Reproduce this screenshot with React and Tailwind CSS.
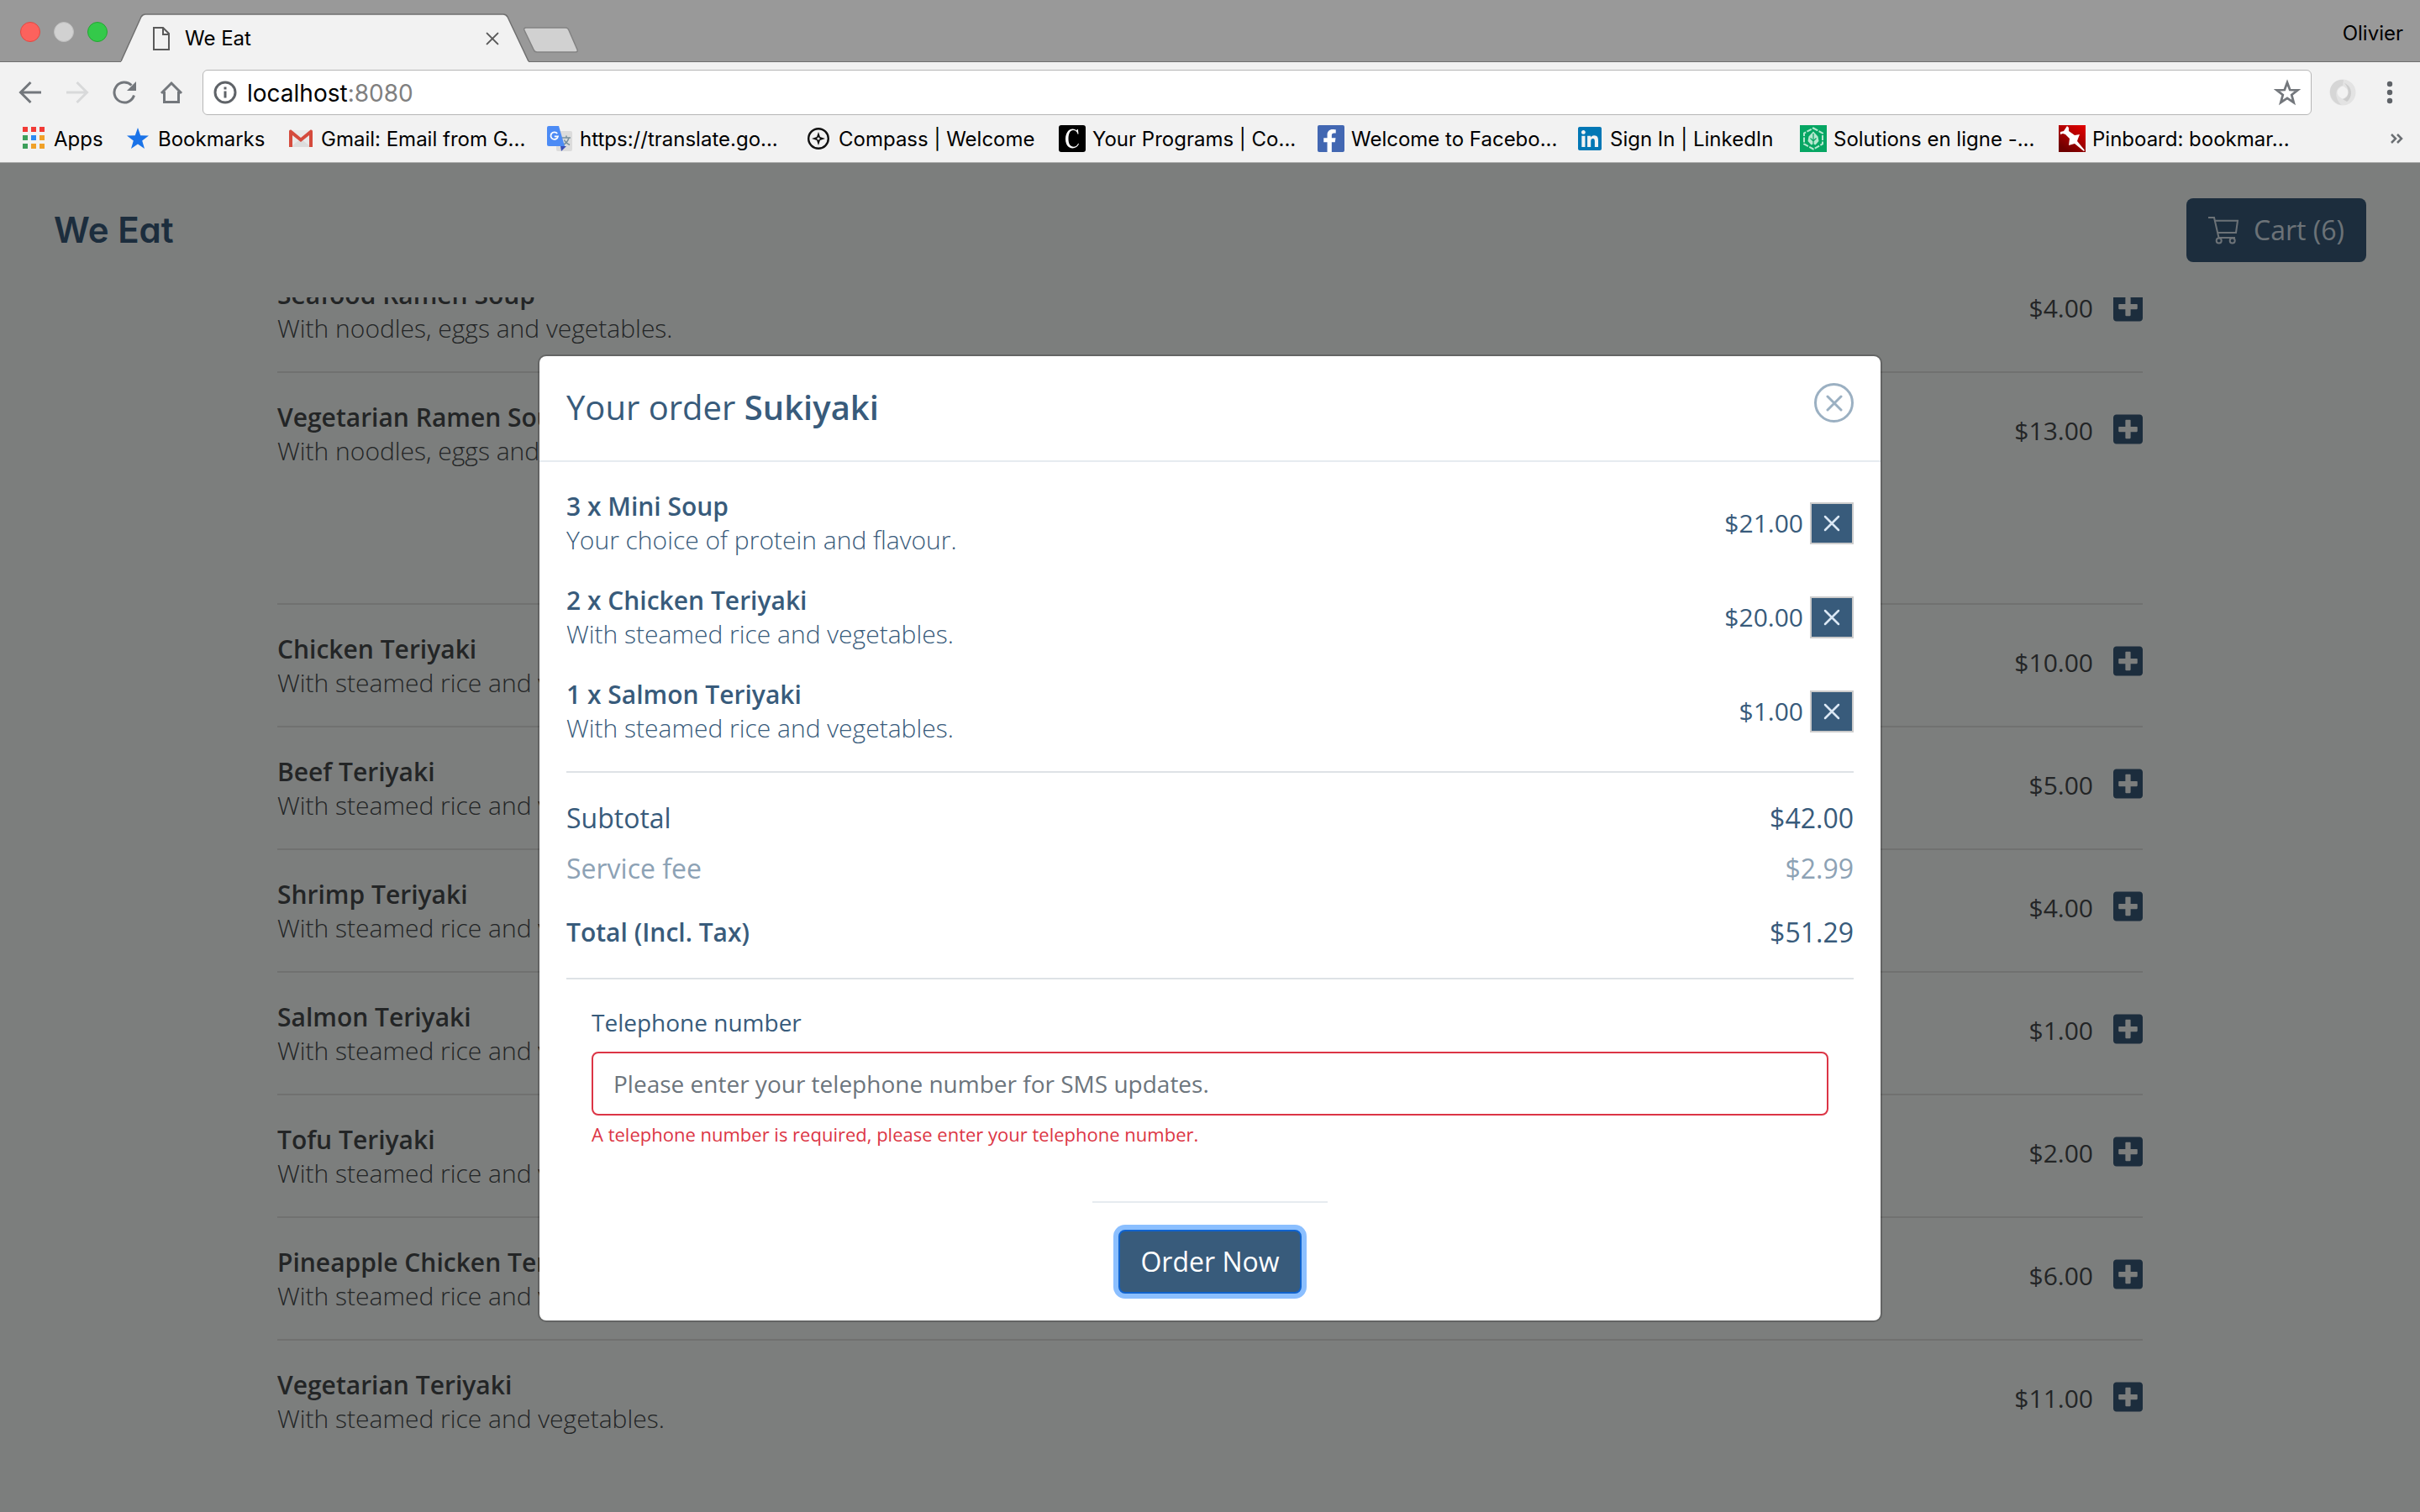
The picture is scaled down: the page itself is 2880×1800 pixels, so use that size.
import React from "react";
import { FaFacebookF, FaLinkedin, FaPlusSquare } from "react-icons/fa";

const bookmarks = [
  { label: "Apps", icon: AppsIcon, width: "w-[124px]" },
  { label: "Bookmarks", icon: BookmarkStar, width: "w-[194px]" },
  { label: "Gmail: Email from G...", icon: GmailIcon, width: "w-[308px]" },
  { label: "https://translate.go...", icon: TranslateIcon, width: "w-[308px]" },
  { label: "Compass | Welcome", icon: CompassIcon, width: "w-[302px]" },
  { label: "Your Programs | Co...", icon: ProgramsIcon, width: "w-[308px]" },
  { label: "Welcome to Facebo...", icon: FacebookIcon, width: "w-[308px]" },
  { label: "Sign In | LinkedIn", icon: LinkedInIcon, width: "w-[266px]" },
  { label: "Solutions en ligne -...", icon: SolutionsIcon, width: "w-[308px]" },
  { label: "Pinboard: bookmar...", icon: PinboardIcon, width: "w-[308px]" },
];

const soups = [
  { name: "Seafood Ramen Soup", desc: "With noodles, eggs and vegetables.", price: "$4.00" },
  { name: "Vegetarian Ramen Soup", desc: "With noodles, eggs and vegetables.", price: "$13.00" },
];

const teriyaki = [
  { name: "Chicken Teriyaki", price: "$10.00" },
  { name: "Beef Teriyaki", price: "$5.00" },
  { name: "Shrimp Teriyaki", price: "$4.00" },
  { name: "Salmon Teriyaki", price: "$1.00" },
  { name: "Tofu Teriyaki", price: "$2.00" },
  { name: "Pineapple Chicken Teriyaki", price: "$6.00" },
  { name: "Vegetarian Teriyaki", price: "$11.00" },
].map((dish) => ({ ...dish, desc: "With steamed rice and vegetables." }));

const order = [
  { name: "3 x Mini Soup", desc: "Your choice of protein and flavour.", price: "$21.00" },
  { name: "2 x Chicken Teriyaki", desc: "With steamed rice and vegetables.", price: "$20.00" },
  { name: "1 x Salmon Teriyaki", desc: "With steamed rice and vegetables.", price: "$1.00" },
];

function AppsIcon() {
  const colors = ["#f23b36", "#f23b36", "#f23b36", "#3d9f5b", "#2b8bf2", "#f0a128", "#3d9f5b", "#f0a128", "#f0a128"];
  return (
    <svg className="size-8" viewBox="0 0 32 32" aria-hidden="true">
      {colors.map((c, i) => (
        <rect key={i} x={3 + (i % 3) * 10} y={2 + Math.floor(i / 3) * 10} width="6" height="6" fill={c} />
      ))}
    </svg>
  );
}

function BookmarkStar() {
  return (
    <svg className="size-8" viewBox="0 0 32 32" aria-hidden="true">
      <path d="M16 3l3.2 9.3 9.8.2-7.8 6 2.8 9.5-8-5.6L8 28l2.8-9.5-7.8-6 9.8-.2z" fill="#1a73e8" />
    </svg>
  );
}

function GmailIcon() {
  return (
    <svg className="size-8" viewBox="0 0 32 32" aria-hidden="true">
      <path d="M3 6h26v20H3z" fill="#e9e9e9" />
      <path d="M4 26l12-10 12 10z" fill="#dcdcdc" />
      <path d="M2 7.500C2 6 3.500 5 5 6l11 9 11-9c1.500-1 3 0 3 1.500V26h-4V12l-10 8L6 12v14H2z" fill="#d54b3d" />
    </svg>
  );
}

function TranslateIcon() {
  return (
    <svg className="size-8" viewBox="0 0 32 32" aria-hidden="true">
      <rect x="12" y="7" width="19" height="24" rx="2" fill="#dcdcdc" />
      <path d="M17 25h7l-6 6z" fill="#3a50b5" />
      <path d="M19 15h10M24 12.500V15M27 15c-1 4-4 7-7 8.500M21.500 17.500c1 2.500 3.500 4.500 6.500 6" fill="none" stroke="#78909c" strokeWidth="1.500" />
      <path d="M3 1h12l7 24H3a2 2 0 0 1-2-2V3a2 2 0 0 1 2-2z" fill="#4c8bf5" />
      <path d="M13.200 10A4.300 4.300 0 1 0 14 13.300H9.800" fill="none" stroke="#fff" strokeWidth="1.800" />
    </svg>
  );
}

function CompassIcon() {
  return (
    <svg className="size-8" viewBox="0 0 32 32" aria-hidden="true">
      <circle cx="16" cy="16" r="11.800" fill="none" stroke="#111" strokeWidth="2.400" />
      <path d="M16 8l2 6 6 2-6 2-2 6-2-6-6-2 6-2z" fill="#111" />
      <circle cx="16" cy="16" r="1.600" fill="#f2f2f2" />
    </svg>
  );
}

function ProgramsIcon() {
  return (
    <svg className="size-8" viewBox="0 0 32 32" aria-hidden="true">
      <rect width="32" height="32" rx="3" fill="#000" />
      <path
        d="M23.500 10.500l-.6-5.500h-.9l-1 1.400C19.800 5.300 18.400 4.600 16.800 4.600 11.500 4.600 8 9.700 8 16.400s3.400 11 8.600 11c3.400 0 6-1.900 7.400-5.200l-.9-.4c-1.200 2.500-3 3.900-5.400 3.900-4 0-6.200-3.500-6.200-9.500 0-6.200 2.100-10.100 5.600-10.100 2.700 0 4.600 1.600 5.500 4.600z"
        fill="#fff"
      />
    </svg>
  );
}

function FacebookIcon() {
  return (
    <span className="flex size-8 items-end justify-end rounded-xs bg-[#4267b2] pr-1 text-white">
      <FaFacebookF size={27} aria-hidden="true" />
    </span>
  );
}

function LinkedInIcon() {
  return (
    <span className="flex size-8 items-center justify-center text-[#0077b5]">
      <FaLinkedin size={32} aria-hidden="true" />
    </span>
  );
}

function SolutionsIcon() {
  return (
    <svg className="size-8" viewBox="0 0 32 32" aria-hidden="true">
      <rect width="32" height="32" fill="#06a663" />
      <path d="M16 3.500L27 9.500v13L16 28.500 5 22.500v-13z" fill="none" stroke="#b5e8cf" strokeWidth="2" strokeDasharray="6 1.500" />
      <path d="M16 7.500l5.500 6 1 5.500-4 4.500-2.500-1-2.500 1-4-4.500 1-5.500z" fill="#b5e8cf" />
      <path d="M16 10v13M12.500 15.500l3.500 3.500 3.500-3.500" stroke="#06a663" strokeWidth="1.200" fill="none" />
    </svg>
  );
}

function PinboardIcon() {
  return (
    <svg className="size-8" viewBox="0 0 32 32" aria-hidden="true">
      <defs>
        <linearGradient id="pin-red" x1="1" y1="0" x2="0.400" y2="1">
          <stop offset="0" stopColor="#e40000" />
          <stop offset="0.550" stopColor="#a80000" />
          <stop offset="1" stopColor="#6e0000" />
        </linearGradient>
      </defs>
      <rect width="32" height="32" fill="url(#pin-red)" />
      <path d="M10 1l2 2v4l7 5 6-1-2 5-1 3 9 11-1 1-11-9-7 2 1-8-5-5-3-1-3 1 0-3 4-1z" fill="#fff" />
    </svg>
  );
}

function Cross({ className }) {
  return (
    <svg className={className} viewBox="0 0 20 20" fill="none" stroke="currentColor" strokeLinecap="round" aria-hidden="true">
      <path d="M2 2l16 16M18 2L2 18" />
    </svg>
  );
}

function NavButton({ label, children }) {
  return (
    <button type="button" aria-label={label} className="flex h-12 w-14 shrink-0 items-center justify-center text-[#73777c]">
      {children}
    </button>
  );
}

function TabStrip() {
  return (
    <div className="flex h-[74px] shrink-0 items-end border-b border-[#6f6f6f] bg-[#999999]">
      <div className="flex gap-4 self-center pt-0.5 pl-6">
        <span className="size-6 rounded-full border border-[#e14942] bg-[#fc625d]" />
        <span className="size-6 rounded-full border border-[#bdbdbd] bg-[#d1d1d1]" />
        <span className="size-6 rounded-full border border-[#24a732] bg-[#34c94a]" />
      </div>
      <div className="relative -mb-px ml-4 flex h-[58px] w-[486px] items-center pt-0.5 pr-9 pl-[38px]">
        <svg className="absolute inset-0 size-full" viewBox="0 0 486 58" preserveAspectRatio="none" aria-hidden="true">
          <path d="M0 57L24 4q2-3 5-3h426q3 0 5 3l25 53v1H0z" fill="#f2f2f2" />
          <path d="M0 57L24 4q2-3 5-3h426q3 0 5 3l25 53" fill="none" stroke="#6f6f6f" strokeWidth="1.500" />
        </svg>
        <svg className="relative h-7 w-5 shrink-0" viewBox="0 0 20 28" fill="none" stroke="#5a5a5a" strokeWidth="2" aria-hidden="true">
          <path d="M1 1h11l7 7v19H1zM12 1v8h7" />
        </svg>
        <span className="relative ml-[18px] flex-1 text-2xl text-black">We Eat</span>
        <button type="button" aria-label="Close tab" className="relative text-[#5a5a5a]">
          <Cross className="size-4 stroke-[2.500]" />
        </button>
      </div>
      <button type="button" aria-label="New tab" className="relative -ml-2 mb-[9px]">
        <svg className="h-8 w-[66px]" viewBox="0 0 66 32" aria-hidden="true">
          <path d="M4 1h47q3 0 4 3l10 23q1 3-2 3H17q-3 0-4-3L2 4Q1 1 4 1z" fill="#d1d1d1" stroke="#838383" strokeWidth="1.500" />
        </svg>
      </button>
      <span className="mr-5 ml-auto self-center pt-1.5 text-2xl leading-8 text-black">Olivier</span>
    </div>
  );
}

function Toolbar() {
  return (
    <div className="shrink-0 border-b border-[#a9aba9] bg-[#f2f2f2] pt-[9px]">
      <div className="flex h-[54px] items-center gap-[9px] px-2">
        <div className="flex">
          <NavButton label="Back">
            <svg className="size-7" viewBox="0 0 28 28" fill="none" stroke="currentColor" strokeWidth="3" aria-hidden="true">
              <path d="M27 14H3M14.500 2L2.500 14l12 12" />
            </svg>
          </NavButton>
          <NavButton label="Forward">
            <svg className="size-7 text-[#d8d9da]" viewBox="0 0 28 28" fill="none" stroke="currentColor" strokeWidth="3" aria-hidden="true">
              <path d="M1 14h24M13.500 2l12 12-12 12" />
            </svg>
          </NavButton>
          <NavButton label="Reload">
            <svg className="size-7" viewBox="0 0 28 28" fill="none" stroke="currentColor" strokeWidth="3" aria-hidden="true">
              <path d="M25.500 17.500A12 12 0 1 1 22.500 5.500" />
              <path d="M28 1v11H17z" fill="currentColor" stroke="none" />
            </svg>
          </NavButton>
          <NavButton label="Home">
            <svg className="size-7" viewBox="0 0 28 28" fill="none" stroke="currentColor" strokeWidth="3" aria-hidden="true">
              <path d="M2 15L14 3l12 12M5.500 13v12.500h17V13" />
            </svg>
          </NavButton>
        </div>
        <div className="flex h-[54px] flex-1 items-center rounded-md border border-[#b6b6b6] bg-white pr-3 pl-3">
          <svg className="size-7 shrink-0" viewBox="0 0 28 28" fill="none" stroke="#5f6368" strokeWidth="3" aria-hidden="true">
            <circle cx="14" cy="14" r="12" />
            <path d="M14 12.500v8M14 7.500v3" />
          </svg>
          <div className="ml-3 flex-1 pt-0.5 text-[28px] leading-9 text-black">
            localhost<span className="text-[#808080]">:8080</span>
          </div>
          <button type="button" aria-label="Bookmark this page">
            <svg className="size-8" viewBox="0 0 30 30" fill="none" stroke="#73777c" strokeWidth="2.600" aria-hidden="true">
              <path d="M15 4l3 8.200 8.600.3-6.700 5.300 2.300 8.400L15 21.400l-7.200 4.800 2.300-8.400-6.700-5.300 8.600-.3z" />
            </svg>
          </button>
        </div>
        <div className="flex">
          <NavButton label="Extension">
            <svg className="size-8" viewBox="0 0 32 32" fill="none" aria-hidden="true">
              <circle cx="16" cy="16" r="11" stroke="#e3e3e3" strokeWidth="9" />
              <path d="M17 1C7 0 0 8 1 17c1 7 6 13 14 14C7 26 5 10 16 8" fill="#d6d6d6" />
              <path d="M16 24c8-1 9-12 2-19 9 3 11 16 3 22" fill="#cdcdcd" />
              <ellipse cx="16" cy="16" rx="4.500" ry="7.500" fill="#f2f2f2" />
            </svg>
          </NavButton>
          <NavButton label="Menu">
            <svg className="size-8" viewBox="0 0 32 32" fill="#5f6368" aria-hidden="true">
              <circle cx="16" cy="6" r="3.200" />
              <circle cx="16" cy="16" r="3.200" />
              <circle cx="16" cy="26" r="3.200" />
            </svg>
          </NavButton>
        </div>
      </div>
      <nav aria-label="Bookmarks bar" className="flex h-14 items-center pr-5 pl-6">
        {bookmarks.map(({ label, icon: Icon, width }) => (
          <a key={label} href="#" className={`flex shrink-0 items-center gap-2 text-2xl whitespace-nowrap text-black ${width}`}>
            <span className="shrink-0">
              <Icon />
            </span>
            <span className="pt-0.5">{label}</span>
          </a>
        ))}
        <button type="button" aria-label="More bookmarks" className="ml-auto">
          <svg className="h-3.5 w-4" viewBox="0 0 16 14" fill="none" stroke="#6b6f73" strokeWidth="2.500" aria-hidden="true">
            <path d="M2 2l5 5-5 5M9 2l5 5-5 5" />
          </svg>
        </button>
      </nav>
    </div>
  );
}

function MenuRow({ dish, last }) {
  return (
    <li className={`flex items-start border-b-2 border-[#e0e3e1] pt-[33px] text-[#464a4c] ${last ? "pb-[161px]" : "pb-[31px]"}`}>
      <div className="flex-1">
        <h3 className="font-semibold">{dish.name}</h3>
        <p className="font-light">{dish.desc}</p>
      </div>
      <div className="flex items-start gap-6 pt-3.5">
        <span className="pt-0.5">{dish.price}</span>
        <button type="button" aria-label={`Add ${dish.name}`} className="text-[#385b7b]">
          <FaPlusSquare className="h-10 w-[35px]" aria-hidden="true" />
        </button>
      </div>
    </li>
  );
}

function Restaurant() {
  return (
    <div className="flex h-full flex-col bg-[#f8fcfa]">
      <header className="flex h-40 shrink-0 items-center justify-between px-16">
        <a href="#" className="font-[Inter] text-[42px] leading-[60px] font-semibold text-[#385b7b] [font-feature-settings:'cv11']">
          We Eat
        </a>
        <button type="button" className="flex h-[76px] items-center gap-[18px] rounded-lg bg-[#385b7b] px-[26px] text-[32px] text-[#d9e5ef]">
          <svg className="h-[33px] w-9" viewBox="0 0 36 33" fill="none" stroke="currentColor" strokeWidth="2" aria-hidden="true">
            <path d="M0 1h7l5.500 24H32M7.500 4.700H35L33 19H10.500" />
            <circle cx="12.700" cy="28.500" r="3" />
            <circle cx="28.700" cy="28.500" r="3" />
          </svg>
          Cart (6)
        </button>
      </header>
      <main className="min-h-0 flex-1 overflow-hidden">
        <div className="mx-auto -mt-14 max-w-[2220px] text-[30px] leading-10">
          <ul>
            {soups.map((dish, i) => (
              <MenuRow key={dish.name} dish={dish} last={i === soups.length - 1} />
            ))}
          </ul>
          <ul>
            {teriyaki.map((dish, i) => (
              <MenuRow key={dish.name} dish={dish} last={i === teriyaki.length - 1} />
            ))}
          </ul>
        </div>
      </main>
    </div>
  );
}

function OrderDialog() {
  return (
    <div
      role="dialog"
      aria-modal="true"
      aria-labelledby="order-title"
      className="w-full max-w-[1600px] rounded-[10px] border-2 border-black/20 bg-white bg-clip-padding text-[#385b7b]"
    >
      <div className="flex items-start justify-between border-b-2 border-[#e6ebf0] px-8 pt-8 pb-[34px]">
        <h2 id="order-title" className="text-[40px] leading-[58px]">
          Your order <strong className="font-semibold">Sukiyaki</strong>
        </h2>
        <button type="button" aria-label="Close" className="flex size-[47px] items-center justify-center rounded-full border-3 border-[#9bb0c2] text-[#9bb0c2]">
          <Cross className="size-5 stroke-[3]" />
        </button>
      </div>
      <div className="px-8 pt-[33px]">
        <ul className="flex flex-col gap-8 border-b-2 border-[#dee2e6] pb-[31px] text-[30px] leading-10">
          {order.map((line) => (
            <li key={line.name} className="flex items-center">
              <div className="flex-1">
                <h3 className="font-semibold">{line.name}</h3>
                <p className="font-light">{line.desc}</p>
              </div>
              <span>{line.price}</span>
              <button
                type="button"
                aria-label={`Remove ${line.name}`}
                className="ml-2 flex h-[50px] w-[52px] items-center justify-center border-2 border-[#cccccc] bg-[#385b7b] text-[#dbe8f5]"
              >
                <Cross className="size-5 stroke-[2.500]" />
              </button>
            </li>
          ))}
        </ul>
        <dl className="border-b-2 border-[#dee2e6] py-[30px] text-[32px] leading-[48px]">
          <div className="flex justify-between">
            <dt>Subtotal</dt>
            <dd>$42.00</dd>
          </div>
          <div className="mt-3 flex justify-between text-[#8da2b5]">
            <dt>Service fee</dt>
            <dd>$2.99</dd>
          </div>
          <div className="mt-7 flex justify-between">
            <dt className="text-[30px] font-semibold">Total (Incl. Tax)</dt>
            <dd>$51.29</dd>
          </div>
        </dl>
        <form className="px-[30px] pt-[30px]">
          <label htmlFor="telephone" className="block text-[28px] leading-[42px]">
            Telephone number
          </label>
          <input
            id="telephone"
            type="tel"
            aria-invalid="true"
            aria-describedby="telephone-error"
            placeholder="Please enter your telephone number for SMS updates."
            className="mt-3.5 block h-[76px] w-full rounded-lg border-2 border-[#dc3545] bg-white px-6 text-[28px] text-[#495057] outline-none placeholder:text-[#6c757d]"
          />
          <p id="telephone-error" className="mt-1 text-[22px] leading-9 text-[#dc3545]">
            A telephone number is required, please enter your telephone number.
          </p>
        </form>
      </div>
      <div className="mx-auto mt-[62px] flex w-[280px] justify-center border-t-2 border-[#e6ebf0] py-8">
        <button type="button" className="h-[76px] rounded-lg border-2 border-[#0f62cc] bg-[#385b7b] px-6 text-[32px] text-white ring-6 ring-[#8bbfff]">
          Order Now
        </button>
      </div>
    </div>
  );
}

export default function App() {
  return (
    <div className="flex h-screen flex-col overflow-hidden font-[Inter,sans-serif]">
      <TabStrip />
      <Toolbar />
      <div className="relative min-h-0 flex-1 font-['Open_Sans',sans-serif]">
        <Restaurant />
        <div className="absolute inset-0 flex items-start justify-center bg-black/50 pt-[228px]">
          <OrderDialog />
        </div>
      </div>
    </div>
  );
}
